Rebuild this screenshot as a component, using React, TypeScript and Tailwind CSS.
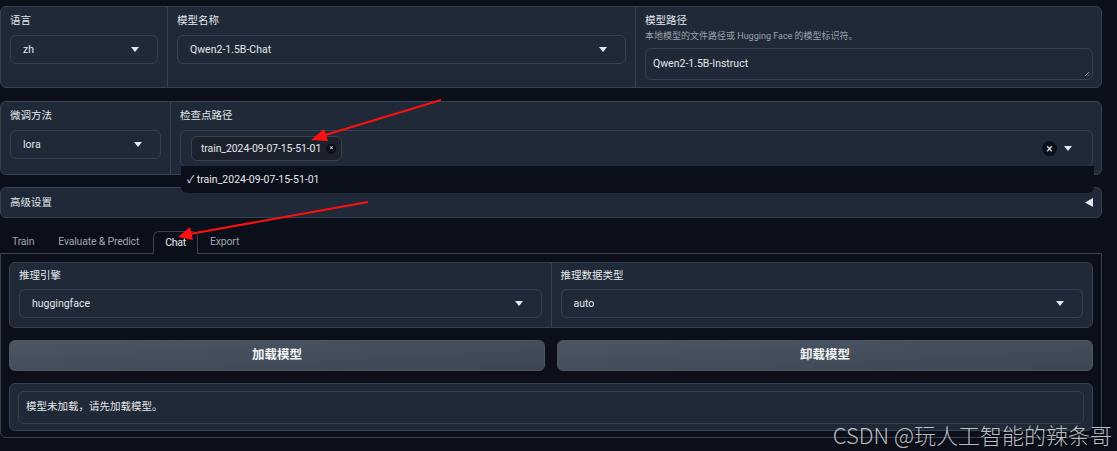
const font = "font-['Roboto','Noto_Sans_CJK_SC',sans-serif]";

function Caret() {
  return (
    <svg width="8" height="5" viewBox="0 0 8 5" className="shrink-0">
      <path d="M0 0 L8 0 L4 5 Z" fill="#e5e7eb" />
    </svg>
  );
}

function Select({ value, className = '' }: { value: string; className?: string }) {
  return (
    <div
      className={`flex h-[29px] items-center justify-between rounded-[6px] border border-[#374151] bg-[#1f2937] pl-[12px] pr-[18px] text-[10.5px] text-[#e5e7eb] ${className}`}
    >
      <span>{value}</span>
      <Caret />
    </div>
  );
}

function Label({ children }: { children: React.ReactNode }) {
  return <div className="text-[10.5px] leading-[14px] text-[#e5e7eb]">{children}</div>;
}

function Arrows() {
  return (
    <svg className="pointer-events-none absolute left-0 top-0" width="1117" height="451">
      <line x1="441" y1="100" x2="322" y2="136" stroke="#ff1010" strokeWidth="2" />
      <polygon points="311,140 324,129 328,141" fill="#ff1010" />
      <line x1="368" y1="202" x2="190" y2="234" stroke="#ff1010" strokeWidth="2" />
      <polygon points="178,237 190,227 193,240" fill="#ff1010" />
    </svg>
  );
}

export default function App() {
  return (
    <div className={`relative h-[451px] w-[1117px] overflow-hidden bg-[#0b0f19] ${font}`}>
      <div className="flex w-[1102px] flex-col pt-[6px]">
        {/* row 1 */}
        <div className="flex h-[82px] rounded-[6px] border border-[#374151] bg-[#1f2937]">
          <div className="flex w-[167px] flex-col gap-[7px] border-r border-[#374151] pl-[9px] pr-[9px] pt-[7px]">
            <Label>语言</Label>
            <Select value="zh" className="pr-[17px]" />
          </div>
          <div className="flex w-[468px] flex-col gap-[7px] border-r border-[#374151] pl-[9px] pr-[9px] pt-[7px]">
            <Label>模型名称</Label>
            <Select value="Qwen2-1.5B-Chat" />
          </div>
          <div className="flex flex-1 flex-col pl-[9px] pr-[8px] pt-[7px]">
            <Label>模型路径</Label>
            <div className="mt-[2px] text-[9px] leading-[12px] text-[#9ca3af]">本地模型的文件路径或 Hugging Face 的模型标识符。</div>
            <div className="relative mt-[6px] flex h-[32px] items-center rounded-[6px] border border-[#374151] bg-[#1f2937] pl-[7px] text-[10.5px] text-[#e5e7eb]">
              Qwen2-1.5B-Instruct
              <svg className="absolute bottom-[2px] right-[2px]" width="6" height="6" viewBox="0 0 6 6">
                <path d="M1 5 L5 1 M3.5 5 L5 3.5" stroke="#9ca3af" strokeWidth="0.8" />
              </svg>
            </div>
          </div>
        </div>

        {/* row 2 */}
        <div className="relative mt-[13px] flex h-[74px] rounded-[6px] border border-[#374151] bg-[#1f2937]">
          <div className="flex w-[170px] flex-col gap-[7px] border-r border-[#374151] pl-[9px] pr-[9px] pt-[7px]">
            <Label>微调方法</Label>
            <Select value="lora" />
          </div>
          <div className="flex flex-1 flex-col gap-[7px] pl-[9px] pr-[8px] pt-[7px]">
            <Label>检查点路径</Label>
            <div className="flex h-[37px] items-center justify-between rounded-[6px] border border-[#374151] bg-[#1f2937] pl-[10px] pr-[20px]">
              <div className="flex h-[25px] items-center gap-[5px] rounded-[6px] border border-[#374151] bg-[#1b222d] pl-[9px] pr-[5px] text-[10.5px] tracking-[-0.1px] text-[#e5e7eb]">
                train_2024-09-07-15-51-01
                <span className="flex h-[10px] w-[10px] items-center justify-center rounded-full bg-[#0b0f19] text-[7px] leading-none text-[#e5e7eb]">×</span>
              </div>
              <div className="flex items-center gap-[7px]">
                <span className="flex h-[15px] w-[15px] items-center justify-center rounded-full bg-[#0b0f19] text-[12px] leading-none text-[#e5e7eb]">×</span>
                <Caret />
              </div>
            </div>
          </div>
          <div className="absolute left-[180px] top-[64px] z-10 flex h-[27px] w-[913px] items-center rounded-b-[6px] bg-[#0b0f19] pl-[6px] text-[10.5px] text-[#e5e7eb]">
            ✓ train_2024-09-07-15-51-01
          </div>
        </div>

        {/* accordion */}
        <div className="mt-[12px] flex h-[31px] items-center justify-between rounded-[6px] border border-[#374151] bg-[#1f2937] pl-[9px] pr-[8px]">
          <Label>高级设置</Label>
          <svg width="8" height="9" viewBox="0 0 8 9">
            <path d="M8 0 L0 4.5 L8 9 Z" fill="#e5e7eb" />
          </svg>
        </div>

        {/* tabs */}
        <div className="mt-[12px] flex h-[23px] items-end pl-[2px] text-[10.5px] tracking-[-0.2px] text-[#9ca3af]">
          <div className="flex h-[22px] items-center px-[10px]">Train</div>
          <div className="flex h-[22px] items-center px-[14px]">Evaluate &amp; Predict</div>
          <div className="relative -mb-px flex h-[23px] items-center rounded-t-[6px] border border-b-0 border-[#374151] bg-[#0b0f19] px-[11px] text-[#e5e7eb]">Chat</div>
          <div className="flex h-[22px] items-center px-[12px]">Export</div>
        </div>

        <div className="flex flex-col gap-[12px] rounded-b-[6px] border border-[#374151] p-[8px] pb-[6px]">
          <div className="flex h-[66px] rounded-[6px] border border-[#374151] bg-[#1f2937]">
            <div className="flex flex-1 flex-col gap-[6px] border-r border-[#374151] pl-[9px] pr-[9px] pt-[6px]">
              <Label>推理引擎</Label>
              <Select value="huggingface" />
            </div>
            <div className="flex flex-1 flex-col gap-[6px] pl-[9px] pr-[9px] pt-[6px]">
              <Label>推理数据类型</Label>
              <Select value="auto" />
            </div>
          </div>

          <div className="flex gap-[12px]">
            <button className="flex h-[31px] flex-1 items-center justify-center rounded-[6px] border border-[#4b5563] bg-gradient-to-br from-[#4b5563] to-[#3d4653] text-[12.5px] font-semibold text-[#f3f4f6]">
              加载模型
            </button>
            <button className="flex h-[31px] flex-1 items-center justify-center rounded-[6px] border border-[#4b5563] bg-gradient-to-br from-[#4b5563] to-[#3d4653] text-[12.5px] font-semibold text-[#f3f4f6]">
              卸载模型
            </button>
          </div>

          <div className="flex h-[48px] items-center rounded-[6px] border border-[#374151] bg-[#1f2937] px-[8px]">
            <div className="flex h-[33px] flex-1 items-center rounded-[6px] border border-[#374151] bg-[#1f2937] pl-[7px] text-[10.5px] text-[#e5e7eb]">
              模型未加载，请先加载模型。
            </div>
          </div>
        </div>
      </div>

      <Arrows />

      <div className="absolute bottom-[6px] right-[5px] font-['Noto_Sans_CJK_SC',sans-serif] text-[22px] font-light leading-none text-[#dcdcdc]/85">
        CSDN @玩人工智能的辣条哥
      </div>
    </div>
  );
}
